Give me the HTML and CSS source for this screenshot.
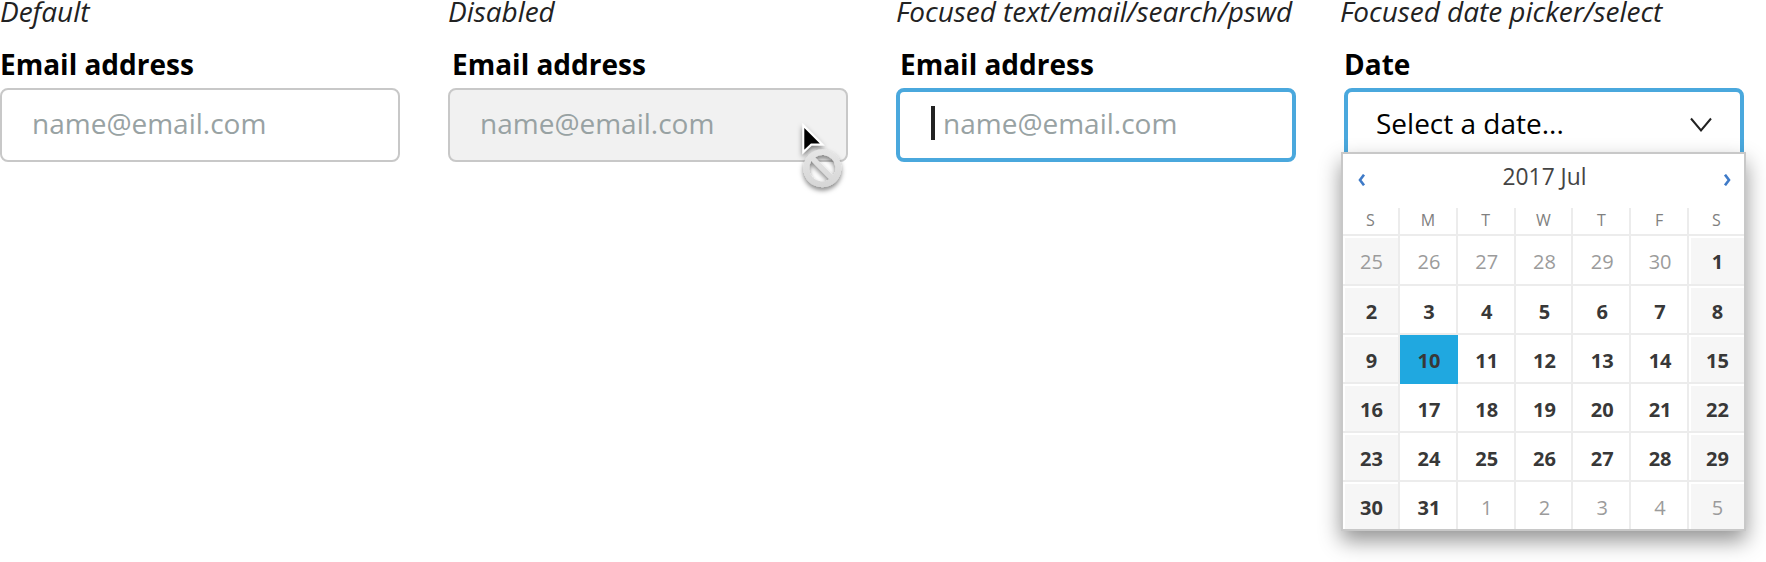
FILE: index.html
```html
<!DOCTYPE html>
<html lang="en">
<head>
<meta charset="utf-8">
<title>Form field states</title>
<link rel="stylesheet" href="styles.css">
</head>
<body>
<main class="states">
  <section class="state">
    <div class="caption">Default</div>
    <div class="label label-flush">Email address</div>
    <div class="field"><span class="placeholder">name@email.com</span></div>
  </section>
  <section class="state">
    <div class="caption">Disabled</div>
    <div class="label">Email address</div>
    <div class="field field-disabled"><span class="placeholder">name@email.com</span>
      <svg class="cursor" width="64" height="90" viewBox="0 0 64 90">
        <defs>
          <linearGradient id="ring" x1="0" y1="0" x2="0" y2="1"><stop offset="0" stop-color="#e6e6e6"/><stop offset="1" stop-color="#d6d6d6"/></linearGradient>
          <filter id="shade" x="-50%" y="-50%" width="200%" height="200%"><feDropShadow dx="0" dy="3" stdDeviation="2.5" flood-color="#000" flood-opacity=".5"/></filter>
        </defs>
        <path class="pointer" filter="url(#shade)" d="M12.300 11.500v26.500l8-7.500h11z"/>
        <g filter="url(#shade)" transform="translate(-.7 -3.700)">
          <path fill="url(#ring)" fill-rule="evenodd" d="M32 39a19 19 0 1 0 0 38a19 19 0 1 0 0-38zM24.800 47.100L42.900 65.200A13 13 0 0 0 24.800 47.100zM21.100 50.800A13 13 0 0 0 39.200 68.900z"/>
        </g>
      </svg>
    </div>
  </section>
  <section class="state">
    <div class="caption">Focused text/email/search/pswd</div>
    <div class="label">Email address</div>
    <div class="field field-focused"><span class="caret"></span><span class="placeholder">name@email.com</span></div>
  </section>
  <section class="state">
    <div class="caption caption-date">Focused date picker/select</div>
    <div class="label label-date">Date</div>
    <div class="field field-focused field-select"><span class="value">Select a date...</span>
      <svg class="chevron" width="22" height="16" viewBox="0 0 22 16"><path d="M1 1.500L11 13.500L21 1.500"/></svg>
      <div class="calendar">
        <div class="calendar-head">
          <svg width="8" height="12" viewBox="0 0 8 12"><path d="M6 .7L2 6l4 5.300"/></svg>
          <span class="month">2017 Jul</span>
          <svg width="8" height="12" viewBox="0 0 8 12"><path d="M2 .7L6 6l-4 5.300"/></svg>
        </div>
        <div class="weekdays"><span>S</span><span>M</span><span>T</span><span>W</span><span>T</span><span>F</span><span>S</span></div>
        <div class="days">
          <span class="out">25</span><span class="out">26</span><span class="out">27</span><span class="out">28</span><span class="out">29</span><span class="out">30</span><span>1</span>
          <span>2</span><span>3</span><span>4</span><span>5</span><span>6</span><span>7</span><span>8</span>
          <span>9</span><span class="selected">10</span><span>11</span><span>12</span><span>13</span><span>14</span><span>15</span>
          <span>16</span><span>17</span><span>18</span><span>19</span><span>20</span><span>21</span><span>22</span>
          <span>23</span><span>24</span><span>25</span><span>26</span><span>27</span><span>28</span><span>29</span>
          <span>30</span><span>31</span><span class="out">1</span><span class="out">2</span><span class="out">3</span><span class="out">4</span><span class="out">5</span>
        </div>
      </div>
    </div>
  </section>
</main>
</body>
</html>
```
FILE: styles.css
```css
* { box-sizing: border-box; }
body {
  margin: 0;
  height: 562px;
  overflow: hidden;
  background: #fff;
  font-family: "Open Sans", "Noto Sans", sans-serif;
  font-size: 28px;
  color: #000;
}
.states {
  display: grid;
  grid-template-columns: repeat(4, 400px);
  column-gap: 48px;
}
.caption {
  height: 38px;
  line-height: 22px;
  font-style: italic;
  letter-spacing: -.04px;
  color: #222;
  white-space: nowrap;
}
.caption-date { margin-left: -4px; }
.label {
  height: 50px;
  line-height: 52px;
  padding-left: 4px;
  font-weight: 700;
}
.label-flush { padding-left: 0; }
.label-date { padding-left: 0; }
.field {
  position: relative;
  display: flex;
  align-items: center;
  height: 74px;
  padding: 0 30px 4px;
  border: 2px solid #c8c8c8;
  border-radius: 8px;
  background: #fff;
}
.field-disabled { background: #f1f1f1; }
.field-focused {
  padding: 0 28px 4px 31px;
  border: 4px solid #4aa8dd;
}
.field-select { justify-content: space-between; padding-left: 28px; }
.placeholder { color: #98a2a3; }
.caret { width: 4px; height: 34px; margin-right: 8px; background: #222; }
.chevron { fill: none; stroke: #222; stroke-width: 2; margin-top: 4px; }
.cursor { position: absolute; left: 341px; top: 24px; }
.pointer { fill: #000; stroke: #fff; stroke-width: 2; }

.calendar {
  position: absolute;
  left: -7px;
  top: 60px;
  width: 405px;
  height: 379px;
  border: 2px solid #c8c8c8;
  background: #fff;
  box-shadow: 0 10px 20px rgba(0, 0, 0, .42);
}
.calendar-head {
  display: flex;
  justify-content: space-between;
  height: 54px;
  padding: 2px 13px 0 15px;
}
.calendar-head svg { margin-top: 18px; fill: none; stroke: #3f7bc8; stroke-width: 2.6; }
.month { font-size: 22.8px; line-height: 41px; color: #444; }
.weekdays, .days {
  display: grid;
  grid-template-columns: 57px repeat(5, 57.8px) 1fr;
  text-align: center;
}
.weekdays {
  height: 28px;
  font-size: 16px;
  line-height: 24px;
  color: #808080;
  border-bottom: 2px solid #ececec;
}
.weekdays span { border-right: 2px solid #ececec; }
.weekdays span:last-child, .days span:nth-child(7n) { border-right: 0; }
.days {
  grid-template-rows: 49.6px repeat(4, 49.2px) minmax(0, 1fr);
  height: 293px;
  font-size: 20px;
  font-weight: 700;
  color: #383838;
}
.days span {
  min-height: 0;
  line-height: 51px;
  padding-left: 2px;
  border-right: 2px solid #ececec;
  border-bottom: 2px solid #ececec;
  box-shadow: inset 2px 2px #fff;
}
.days span:nth-child(7n), .days span:nth-child(7n + 1) { background: #f6f6f6; }
.days span:nth-child(n + 36) { border-bottom: 0; }
.days .out { font-weight: 400; color: #9b9b9b; }
.days .selected { background: #20a8e0; border-color: #20a8e0; box-shadow: none; }
```
